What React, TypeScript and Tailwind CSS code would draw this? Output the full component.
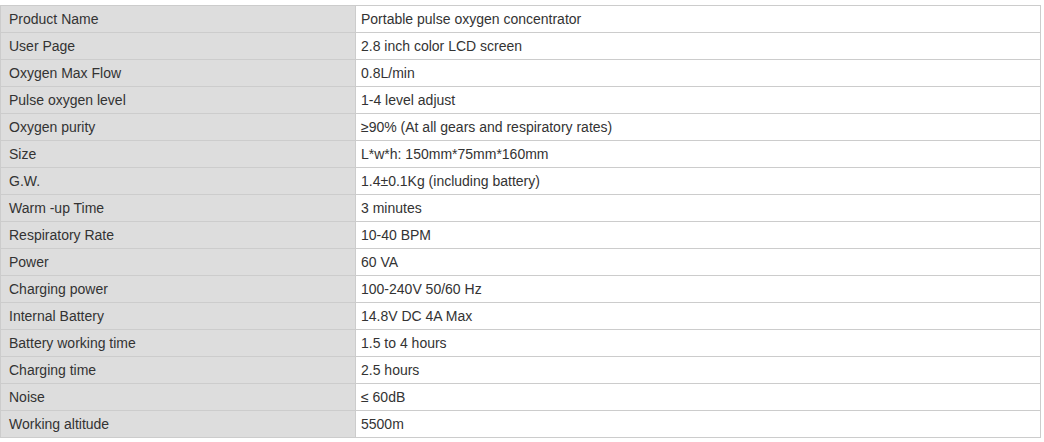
import React from "react";

const rows: [string, string][] = [
  ["Product Name", "Portable pulse oxygen concentrator"],
  ["User Page", "2.8 inch color LCD screen"],
  ["Oxygen Max Flow", "0.8L/min"],
  ["Pulse oxygen level", "1-4 level adjust"],
  ["Oxygen purity", "≥90% (At all gears and respiratory rates)"],
  ["Size", "L*w*h: 150mm*75mm*160mm"],
  ["G.W.", "1.4±0.1Kg (including battery)"],
  ["Warm -up Time", "3 minutes"],
  ["Respiratory Rate", "10-40 BPM"],
  ["Power", "60 VA"],
  ["Charging power", "100-240V 50/60 Hz"],
  ["Internal Battery", "14.8V DC 4A Max"],
  ["Battery working time", "1.5 to 4 hours"],
  ["Charging time", "2.5 hours"],
  ["Noise", "≤ 60dB"],
  ["Working altitude", "5500m"],
];

export default function App() {
  return (
    <div className="w-[1044px] h-[442px] bg-white pt-[5px]" style={{ fontFamily: '"Liberation Sans", Arial, sans-serif' }}>
      <div className="w-[1041px] border-t border-l border-r border-[#cccccc] text-[14px] text-[#333333]">
        {rows.map(([k, v]) => (
          <div key={k} className="flex h-[27px] border-b border-[#cccccc]">
            <div className="w-[355px] shrink-0 bg-[#dddddd] border-r border-[#cccccc] pl-[8px] flex items-center leading-none">
              {k}
            </div>
            <div className="flex-1 bg-white pl-[5px] flex items-center leading-none">{v}</div>
          </div>
        ))}
      </div>
    </div>
  );
}
